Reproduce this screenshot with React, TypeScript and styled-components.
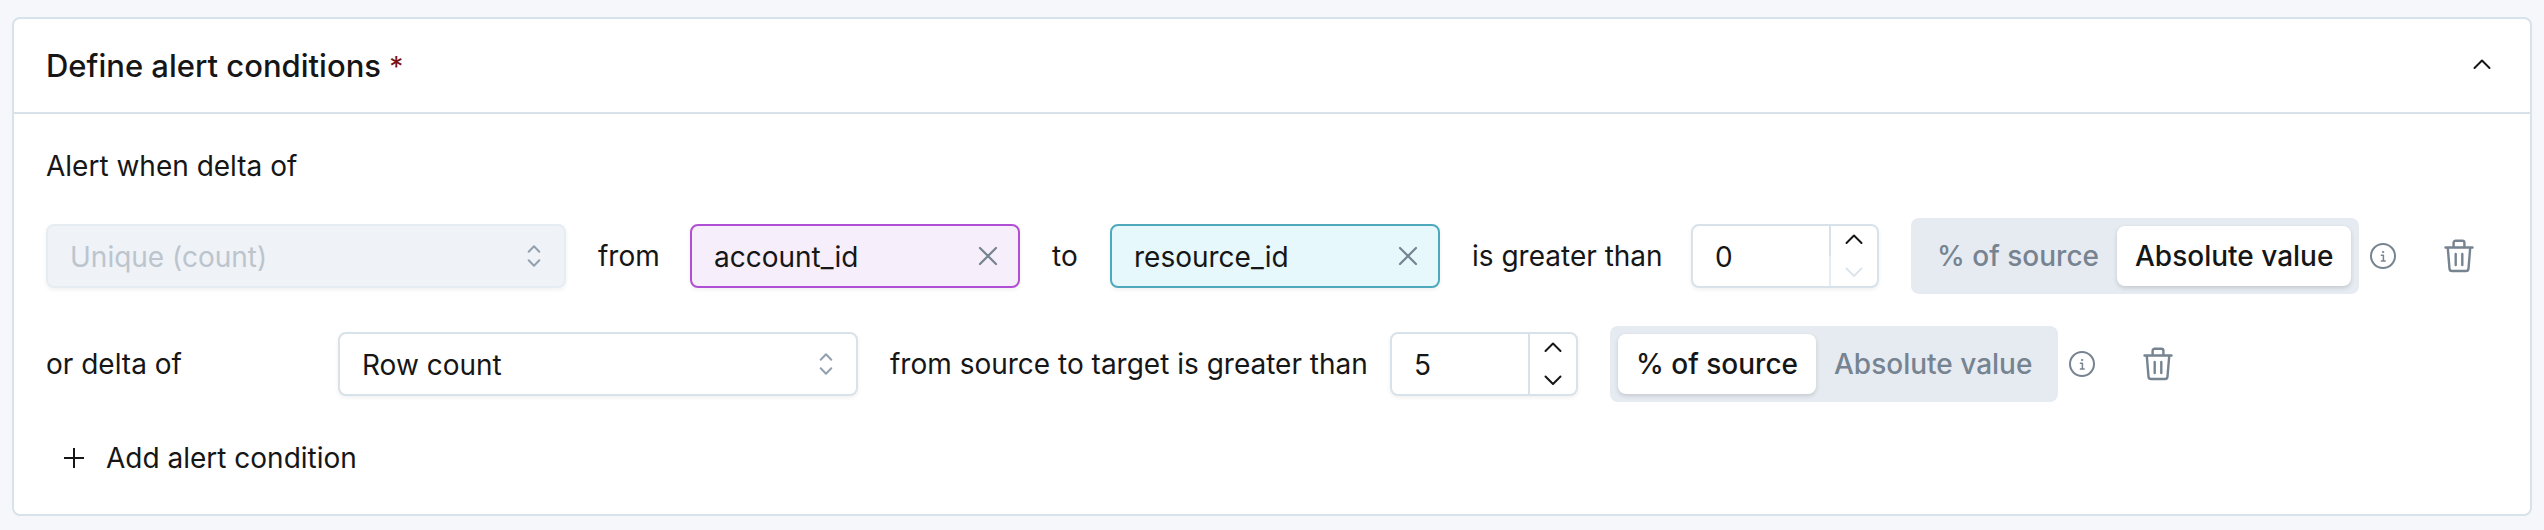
import React, { useId, useState } from "react";
import styled, { createGlobalStyle, css } from "styled-components";

const color = {
  page: "#f5f7fb",
  surface: "#ffffff",
  border: "#d8e2ea",
  text: "#161616",
  muted: "#768390",
  track: "#e6ebf2",
  required: "#7a1212",
};

const GlobalStyle = createGlobalStyle`
  *, *::before, *::after { box-sizing: border-box; }
  body {
    margin: 0;
    background: ${color.page};
    color: ${color.text};
    font-family: Inter, "Liberation Sans", sans-serif;
    font-size: 28px;
    line-height: 40px;
  }
  button, input, select { font: inherit; color: inherit; }
  svg { display: block; flex: none; }
`;

const Page = styled.main`
  padding: 17px 12px 15px;
`;

const Card = styled.section`
  background: ${color.surface};
  border: 2px solid ${color.border};
  border-radius: 8px;
`;

const CardHeader = styled.header`
  display: flex;
  align-items: center;
  justify-content: space-between;
  padding: 24px 32px;
  border-bottom: 2px solid ${color.border};
`;

const Title = styled.h2`
  margin: 0;
  padding-top: 2px;
  font-size: 31px;
  line-height: 42px;
  font-weight: 500;
`;

const Required = styled.span`
  color: ${color.required};
  font-size: 28px;
  font-weight: 400;
`;

const IconButton = styled.button<{ $width: number }>`
  display: flex;
  align-items: center;
  justify-content: center;
  flex: none;
  width: ${(p) => p.$width}px;
  padding: 0;
  border: 0;
  background: none;
  color: ${color.muted};
  cursor: pointer;
`;

const CollapseButton = styled(IconButton)`
  color: ${color.text};
`;

const CardBody = styled.div`
  padding: 32px 32px 24px;
`;

const Intro = styled.p`
  margin: 0;
`;

const Conditions = styled.div`
  display: flex;
  flex-direction: column;
  gap: 32px;
  padding: 32px 0 24px;
`;

const Row = styled.div`
  display: flex;
  align-items: center;
  gap: 32px;
  white-space: nowrap;
  > * { flex: none; }
`;

const Phrase = styled.span<{ $width: number }>`
  width: ${(p) => p.$width}px;
`;

const fieldFrame = css`
  height: 64px;
  border: 2px solid ${color.border};
  border-radius: 8px;
  background: ${color.surface};
  box-shadow: 0 2px 4px rgba(22, 22, 22, 0.06);
`;

const SelectWrap = styled.div`
  position: relative;
  width: 520px;
`;

const SelectBox = styled.select`
  ${fieldFrame}
  display: block;
  width: 100%;
  padding: 2px 64px 0 22px;
  appearance: none;
  &:disabled {
    background: #eff3f7;
    border-color: #e6edf2;
    color: #bcc5cd;
    opacity: 1;
  }
`;

const SelectIcon = styled.span`
  position: absolute;
  top: 16px;
  right: 16px;
  color: #93a1af;
  pointer-events: none;
`;

const Tag = styled.div<{ $tone: "purple" | "teal" }>`
  ${fieldFrame}
  display: flex;
  align-items: center;
  width: 330px;
  padding: 0 14px 0 22px;
  ${(p) =>
    p.$tone === "purple"
      ? "background: #f6eefa; border-color: #b04fd6;"
      : "background: #e6f8fb; border-color: #4fa9bd;"}
`;

const BareInput = styled.input`
  flex: 1;
  min-width: 0;
  padding: 2px 0 0;
  border: 0;
  outline: 0;
  background: none;
  appearance: textfield;
  &::-webkit-inner-spin-button { appearance: none; margin: 0; }
`;

const NumberBox = styled.div`
  ${fieldFrame}
  display: flex;
  width: 188px;
  padding-left: 22px;
`;

const Stepper = styled.div`
  display: grid;
  grid-template-rows: 1fr 1fr;
  width: 48px;
`;

const StepButton = styled.button`
  display: flex;
  align-items: center;
  justify-content: center;
  min-height: 0;
  padding: 0;
  border: 0;
  border-left: 2px solid ${color.border};
  background: none;
  &:disabled {
    color: #dde4ea;
    border-color: #e6edf2;
  }
`;

const ToggleGroup = styled.div`
  display: flex;
  align-items: center;
  gap: 8px;
`;

const Toggle = styled.div`
  display: flex;
  padding: 8px;
  border-radius: 8px;
  background: ${color.track};
`;

const ToggleOption = styled.label<{ $active: boolean }>`
  padding: 10px 18px;
  border-radius: 8px;
  font-weight: 500;
  color: ${color.muted};
  cursor: pointer;
  ${(p) =>
    p.$active &&
    css`
      color: ${color.text};
      background: ${color.surface};
      box-shadow: 0 2px 4px rgba(22, 22, 22, 0.16);
    `}
`;

const HiddenRadio = styled.input`
  position: absolute;
  width: 1px;
  height: 1px;
  margin: 0;
  opacity: 0;
`;

const AddButton = styled.button`
  display: flex;
  align-items: center;
  gap: 16px;
  height: 64px;
  padding: 0 12px;
  border: 0;
  background: none;
  cursor: pointer;
`;

const stroke = {
  fill: "none",
  stroke: "currentColor",
  strokeWidth: 2,
  strokeLinecap: "round",
  strokeLinejoin: "round",
} as const;

const Chevron = ({ down = false }: { down?: boolean }) => (
  <svg width="32" height="32" viewBox="0 0 32 32" {...stroke} aria-hidden="true">
    <path d={down ? "M8.500 13.500l7.500 7.500 7.500-7.500" : "M8.500 18l7.500-7.500 7.500 7.500"} />
  </svg>
);

const UpDown = () => (
  <svg width="32" height="32" viewBox="0 0 32 32" {...stroke} aria-hidden="true">
    <path d="M10.700 11.800L16 6.300l5.300 5.500M10.700 20.200l5.300 5.500 5.300-5.500" />
  </svg>
);

const Cross = () => (
  <svg width="32" height="32" viewBox="0 0 32 32" {...stroke} strokeWidth={2.200} aria-hidden="true">
    <path d="M8 8l16 16M24 8l-16 16" />
  </svg>
);

const Info = () => (
  <svg width="32" height="32" viewBox="0 0 32 32" {...stroke} aria-hidden="true">
    <circle cx="16" cy="16" r="12" />
    <path d="M14.400 15.200h2v5.600M14.400 21h3.800" strokeWidth="1.500" />
    <circle cx="16" cy="12" r="0.700" fill="currentColor" strokeWidth="0.800" />
  </svg>
);

const Trash = () => (
  <svg width="40" height="40" viewBox="0 0 40 40" {...stroke} strokeWidth={2.400} aria-hidden="true">
    <path d="M6.500 11.500h27M14.600 11V6.800a2 2 0 0 1 2-2h6.800a2 2 0 0 1 2 2V11M8.800 12l1.700 20.600a2.600 2.600 0 0 0 2.600 2.400h13.800a2.600 2.600 0 0 0 2.600-2.400L31.200 12M16.700 18v11M23.300 18v11" />
  </svg>
);

const Plus = () => (
  <svg width="32" height="32" viewBox="0 0 32 32" {...stroke} strokeLinecap="butt" aria-hidden="true">
    <path d="M16 6v20M6 16h20" />
  </svg>
);

function Select({ value, disabled }: { value: string; disabled?: boolean }) {
  return (
    <SelectWrap>
      <SelectBox aria-label="Metric" defaultValue={value} disabled={disabled}>
        <option>{value}</option>
      </SelectBox>
      <SelectIcon>
        <UpDown />
      </SelectIcon>
    </SelectWrap>
  );
}

function ColumnTag({ name, tone, label }: { name: string; tone: "purple" | "teal"; label: string }) {
  const [value, setValue] = useState(name);
  return (
    <Tag $tone={tone}>
      <BareInput type="text" aria-label={label} value={value} onChange={(e) => setValue(e.target.value)} />
      <IconButton type="button" $width={32} aria-label={`Clear ${label}`} onClick={() => setValue("")}>
        <Cross />
      </IconButton>
    </Tag>
  );
}

function Threshold({ initial }: { initial: number }) {
  const [value, setValue] = useState(initial);
  return (
    <NumberBox>
      <BareInput
        type="number"
        min={0}
        aria-label="Threshold"
        value={value}
        onChange={(e) => setValue(Number(e.target.value))}
      />
      <Stepper>
        <StepButton type="button" aria-label="Increase" onClick={() => setValue(value + 1)}>
          <Chevron />
        </StepButton>
        <StepButton type="button" aria-label="Decrease" disabled={value <= 0} onClick={() => setValue(value - 1)}>
          <Chevron down />
        </StepButton>
      </Stepper>
    </NumberBox>
  );
}

const units = ["% of source", "Absolute value"];

function UnitToggle({ initial }: { initial: string }) {
  const [unit, setUnit] = useState(initial);
  const name = useId();
  return (
    <ToggleGroup>
      <Toggle role="radiogroup" aria-label="Threshold unit">
        {units.map((u) => (
          <ToggleOption key={u} $active={u === unit}>
            <HiddenRadio type="radio" name={name} checked={u === unit} onChange={() => setUnit(u)} />
            {u}
          </ToggleOption>
        ))}
      </Toggle>
      <IconButton type="button" $width={32} aria-label="About threshold units">
        <Info />
      </IconButton>
    </ToggleGroup>
  );
}

const DeleteButton = () => (
  <IconButton type="button" $width={56} aria-label="Delete condition">
    <Trash />
  </IconButton>
);

export default function App() {
  return (
    <>
      <GlobalStyle />
      <Page>
        <Card>
          <CardHeader>
            <Title>
              Define alert conditions <Required>*</Required>
            </Title>
            <CollapseButton type="button" $width={32} aria-label="Collapse section">
              <Chevron />
            </CollapseButton>
          </CardHeader>
          <CardBody>
            <Intro>Alert when delta of</Intro>
            <Conditions>
              <Row>
                <Select value="Unique (count)" disabled />
                <Phrase $width={60}>from</Phrase>
                <ColumnTag name="account_id" tone="purple" label="source column" />
                <Phrase $width={26}>to</Phrase>
                <ColumnTag name="resource_id" tone="teal" label="target column" />
                <Phrase $width={187}>is greater than</Phrase>
                <Threshold initial={0} />
                <UnitToggle initial="Absolute value" />
                <DeleteButton />
              </Row>
              <Row>
                <Phrase $width={260}>or delta of</Phrase>
                <Select value="Row count" />
                <Phrase $width={468}>from source to target is greater than</Phrase>
                <Threshold initial={5} />
                <UnitToggle initial="% of source" />
                <DeleteButton />
              </Row>
            </Conditions>
            <AddButton type="button">
              <Plus />
              Add alert condition
            </AddButton>
          </CardBody>
        </Card>
      </Page>
    </>
  );
}
